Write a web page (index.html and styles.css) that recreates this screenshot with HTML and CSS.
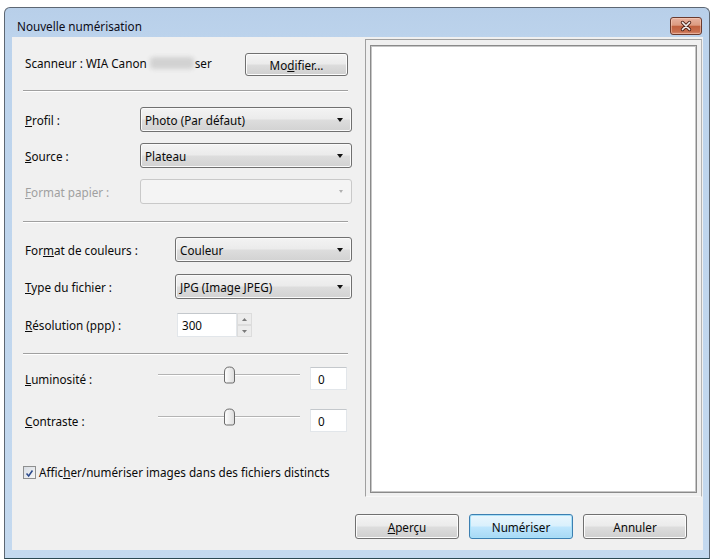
FILE: index.html
```html
<!DOCTYPE html>
<html lang="fr">
<head>
<meta charset="utf-8">
<title>Nouvelle numérisation</title>
<link rel="stylesheet" href="styles.css">
</head>
<body>
<div class="window">
  <div class="titlebar">
    <span class="title">Nouvelle numérisation</span>
    <span class="close">
      <svg width="14" height="12" viewBox="0 0 14 12"><path d="M3.5 2.5 L10.5 9.5 M10.5 2.5 L3.5 9.5" stroke="#4e2218" stroke-width="3.4" stroke-linecap="round"/><path d="M3.5 2.5 L10.5 9.5 M10.5 2.5 L3.5 9.5" stroke="#f4f0ee" stroke-width="1.7" stroke-linecap="round"/></svg>
    </span>
  </div>
  <div class="content">
    <div class="main">
      <div class="left">
        <div class="row scanner">
          <span>Scanneur : WIA Canon</span><span class="blur"></span><span>ser</span>
          <span class="btn btn-mod">Mo<u>d</u>ifier...</span>
        </div>
        <div class="sep sep1"></div>
        <div class="row r-profil">
          <span class="lbl lbl-a"><u>P</u>rofil :</span>
          <div class="combo"><span class="combo-text">Photo (Par défaut)</span><span class="arrow"></span></div>
        </div>
        <div class="row r-next">
          <span class="lbl lbl-a"><u>S</u>ource :</span>
          <div class="combo"><span class="combo-text">Plateau</span><span class="arrow"></span></div>
        </div>
        <div class="row r-next">
          <span class="lbl lbl-a disabled"><u>F</u>ormat papier :</span>
          <div class="combo combo-dis"><span class="combo-text"></span><span class="arrow arrow-dis"></span></div>
        </div>
        <div class="sep sep2"></div>
        <div class="row r-color">
          <span class="lbl lbl-b">For<u>m</u>at de couleurs :</span>
          <div class="combo"><span class="combo-text">Couleur</span><span class="arrow"></span></div>
        </div>
        <div class="row r-type">
          <span class="lbl lbl-b"><u>T</u>ype du fichier :</span>
          <div class="combo"><span class="combo-text">JPG (Image JPEG)</span><span class="arrow"></span></div>
        </div>
        <div class="row r-res">
          <span class="lbl lbl-c"><u>R</u>ésolution (ppp) :</span>
          <span class="field field-res">300</span>
          <span class="spin">
            <span class="spin-btn"><svg width="5" height="3" viewBox="0 0 5 3"><path d="M0 3 L2.5 0 L5 3 Z" fill="#7a7a7a"/></svg></span>
            <span class="spin-btn"><svg width="5" height="3" viewBox="0 0 5 3"><path d="M0 0 L2.5 3 L5 0 Z" fill="#7a7a7a"/></svg></span>
          </span>
        </div>
        <div class="sep sep3"></div>
        <div class="row r-lum">
          <span class="lbl lbl-d"><u>L</u>uminosité :</span>
          <span class="slider">
            <span class="track"></span>
            <svg class="thumb" width="13" height="18" viewBox="0 0 13 18"><defs><linearGradient id="tg" x1="0" y1="0" x2="1" y2="0"><stop offset="0" stop-color="#ffffff"/><stop offset="1" stop-color="#dcdcdc"/></linearGradient></defs><path d="M1.5 6 Q1.5 1 6.5 1 Q11.5 1 11.5 6 V15 Q11.5 17 9.5 17 H3.5 Q1.5 17 1.5 15 Z" fill="url(#tg)" stroke="#6a6a6a" stroke-width="1"/></svg>
          </span>
          <span class="field field-val">0</span>
        </div>
        <div class="row r-con">
          <span class="lbl lbl-d"><u>C</u>ontraste :</span>
          <span class="slider">
            <span class="track"></span>
            <svg class="thumb" width="13" height="18" viewBox="0 0 13 18"><defs><linearGradient id="tg2" x1="0" y1="0" x2="1" y2="0"><stop offset="0" stop-color="#ffffff"/><stop offset="1" stop-color="#dcdcdc"/></linearGradient></defs><path d="M1.5 6 Q1.5 1 6.5 1 Q11.5 1 11.5 6 V15 Q11.5 17 9.5 17 H3.5 Q1.5 17 1.5 15 Z" fill="url(#tg2)" stroke="#6a6a6a" stroke-width="1"/></svg>
          </span>
          <span class="field field-val">0</span>
        </div>
        <div class="row r-check">
          <span class="check"><svg width="13" height="13" viewBox="0 0 13 13"><path d="M3 6.5 L5.5 9.5 L10 3" fill="none" stroke="#2b4a8c" stroke-width="1.8"/></svg></span>
          <span>Affic<u>h</u>er/numériser images dans des fichiers distincts</span>
        </div>
      </div>
      <div class="preview">
        <div class="preview-box"></div>
      </div>
    </div>
    <div class="actions">
      <span class="btn btn-act"><u>A</u>perçu</span>
      <span class="btn btn-act btn-default">Numériser</span>
      <span class="btn btn-act">Annuler</span>
    </div>
  </div>
</div>
</body>
</html>
```
FILE: styles.css
```css
body {
  margin: 0;
  background: #ffffff;
  font-family: "Noto Sans", "DejaVu Sans", sans-serif;
  font-size: 11.7px;
  color: #0a0a0a;
}

u {
  text-decoration: underline;
  text-underline-offset: 1px;
}

.window {
  margin: 7px 0 0 4px;
  width: 706px;
  height: 552px;
  box-sizing: border-box;
  border: 1px solid #5d6773;
  border-bottom-color: #2c4852;
  border-radius: 6px 6px 0 0;
  background: linear-gradient(#b8cfe9, #bcd3ec 30px, #c4d9ef);
  padding: 0 6px 8px 7px;
  display: flex;
  flex-direction: column;
}

.titlebar {
  height: 29px;
  box-sizing: border-box;
  padding: 9px 1px 2px 5px;
  display: flex;
  align-items: center;
}

.title {
  flex: 1;
  color: #0c0c18;
}

.close {
  width: 32px;
  height: 18px;
  box-sizing: border-box;
  border: 1px solid #6a3a2e;
  border-radius: 3px;
  background: linear-gradient(#e8b2a0, #dc9a80 45%, #c0603e 52%, #c86f4f 85%, #d8907a);
  box-shadow: inset 0 0 0 1px rgba(255, 220, 200, 0.45);
  display: flex;
  align-items: center;
  justify-content: center;
}

.content {
  flex: 1;
  background: #f0f0f0;
  display: flex;
  flex-direction: column;
}

.main {
  display: flex;
  height: 460px;
}

.left {
  width: 353px;
  box-sizing: border-box;
  padding: 0 13px;
  display: flex;
  flex-direction: column;
}

.row {
  display: flex;
  align-items: center;
}

.scanner {
  margin-top: 16px;
  height: 23px;
}

.scanner > span:first-child {
  margin-top: -4px;
}

.scanner > span:nth-child(3) {
  margin-top: -4px;
}

.blur {
  display: inline-block;
  width: 44px;
  height: 12px;
  margin: -4px 1px 0 3px;
  background: #d2d2d2;
  border-radius: 4px;
  filter: blur(2px);
}

.btn {
  box-sizing: border-box;
  border: 1px solid #707070;
  border-radius: 3px;
  background: linear-gradient(#f4f4f4, #ebebeb 48%, #dddddd 52%, #cfcfcf);
  box-shadow: inset 0 0 0 1px #fcfcfc;
  display: flex;
  align-items: center;
  justify-content: center;
  color: #0a0a0a;
}

.btn-mod {
  margin-left: auto;
  margin-right: 4px;
  width: 103px;
  height: 23px;
}

.sep {
  height: 0;
  border-top: 1px solid #a0a0a0;
  border-bottom: 1px solid #ffffff;
  margin-left: -2px;
  margin-right: 4px;
}

.sep1 { margin-top: 14px; }
.sep2 { margin-top: 17px; }
.sep3 { margin-top: 16px; }

.lbl { flex: none; }
.lbl-a { width: 115px; }
.lbl-b { width: 150px; }
.lbl-c { width: 152px; }
.lbl-d { width: 133px; }

.disabled { color: #a0a0a0; }

.r-profil { margin-top: 15px; }
.r-next { margin-top: 11px; }
.r-color { margin-top: 14px; }
.r-type { margin-top: 12px; }
.r-res { margin-top: 14px; }
.r-lum { margin-top: 12px; }
.r-con { margin-top: 19px; }
.r-check { margin-top: 32px; margin-left: -2px; }

.combo {
  flex: 1;
  height: 25px;
  box-sizing: border-box;
  border: 1px solid #707070;
  border-radius: 3px;
  background: linear-gradient(#f3f3f3, #ebebeb 48%, #dddddd 52%, #d2d2d2);
  box-shadow: inset 0 0 0 1px #fafafa;
  display: flex;
  align-items: center;
  padding: 0 8px 0 4px;
}

.combo-text {
  flex: 1;
}

.combo-dis {
  border-color: #c9c9c9;
  background: #f4f4f4;
  box-shadow: none;
}

.arrow {
  width: 0;
  height: 0;
  border-left: 3.5px solid transparent;
  border-right: 3.5px solid transparent;
  border-top: 4px solid #111111;
}

.arrow-dis {
  border-left-width: 2.5px;
  border-right-width: 2.5px;
  border-top: 3px solid #b0b0b0;
}

.field {
  box-sizing: border-box;
  background: #ffffff;
  border: 1px solid #e2e6ea;
  border-top-color: #c4c8cc;
  display: flex;
  align-items: center;
}

.field-res {
  width: 60px;
  height: 24px;
  padding-left: 4px;
}

.spin {
  width: 15px;
  height: 24px;
  display: flex;
  flex-direction: column;
}

.spin-btn {
  flex: 1;
  box-sizing: border-box;
  border: 1px solid #dcdcdc;
  background: #ececec;
  display: flex;
  align-items: center;
  justify-content: center;
}

.slider {
  position: relative;
  width: 142px;
  height: 18px;
  display: flex;
  align-items: center;
  margin-top: -7px;
}

.track {
  flex: 1;
  height: 1px;
  background: #b4b4b4;
  border-bottom: 1px solid #ffffff;
}

.thumb {
  position: absolute;
  left: 65px;
  top: 0;
}

.r-con .slider { margin-top: -8px; }

.field-val {
  margin-left: 10px;
  width: 37px;
  height: 23px;
  padding-left: 7px;
}

.check {
  width: 13px;
  height: 13px;
  box-sizing: border-box;
  border: 1px solid #8e8f8f;
  background: linear-gradient(135deg, #d8dde4, #f6f6f6);
  margin-right: 3px;
  display: flex;
}

.preview {
  flex: 1;
  margin: 2px 1px 0 0;
  border: 1px solid #a0a0a0;
  border-right-color: #b4b4b4;
  border-bottom-color: #f8f8f8;
  padding: 5px 4px 3px 4px;
  display: flex;
}

.preview-box {
  flex: 1;
  background: #ffffff;
  border: 1px solid #8a8a8a;
  box-shadow: inset 0 0 0 1px #c6c6c6;
}

.actions {
  display: flex;
  justify-content: flex-end;
  gap: 10px;
  margin-top: 17px;
  padding-right: 16px;
}

.btn-act {
  width: 104px;
  height: 25px;
}

.btn-default {
  border-color: #3c7fb1;
  box-shadow: inset 0 0 0 1px #a8e0f8;
  background: linear-gradient(#eaf6fd, #d9f0fc 48%, #bee6fd 52%, #a7d9f5);
}
```
